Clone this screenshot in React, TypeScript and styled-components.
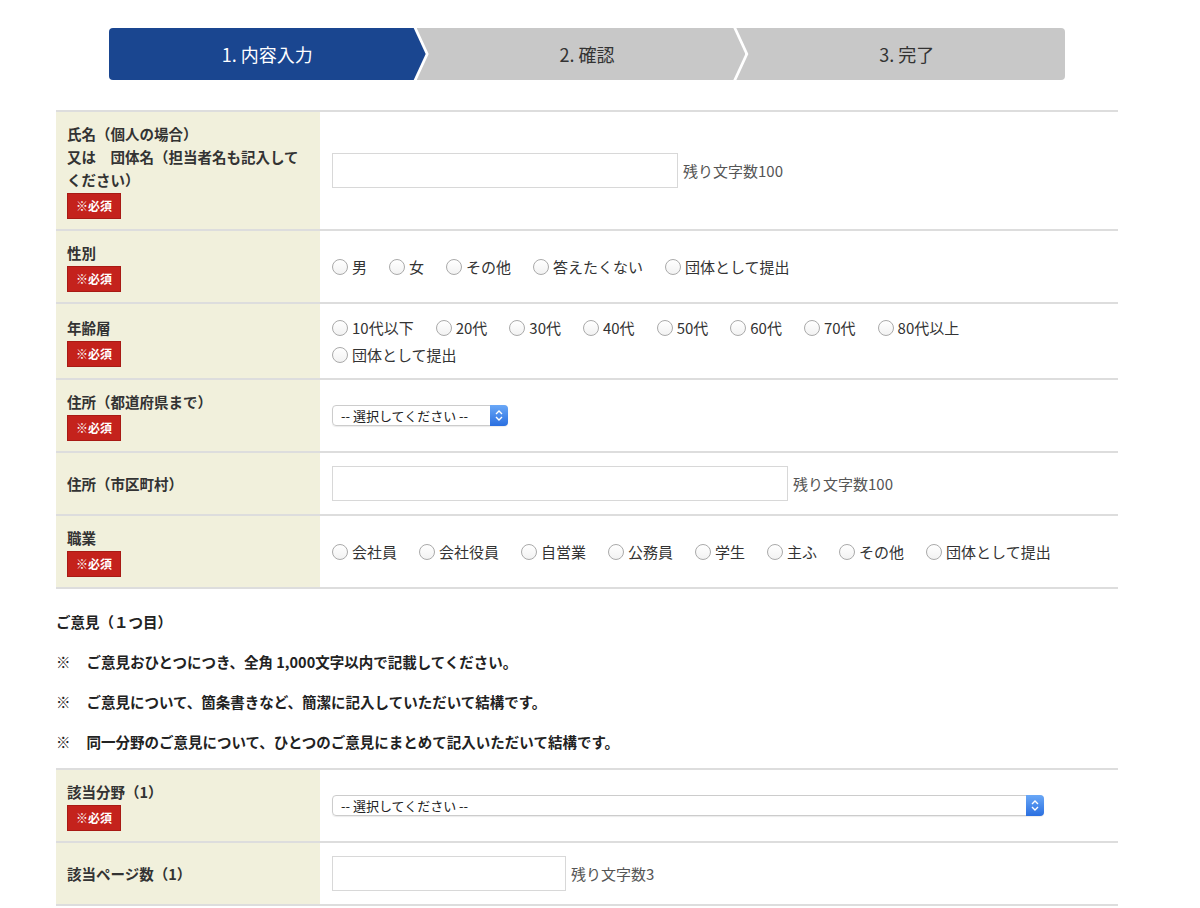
import styled, { createGlobalStyle } from 'styled-components';

const Global = createGlobalStyle`
  body {
    margin: 0;
    background: #fff;
    font-family: "Noto Sans CJK JP", "Noto Sans", sans-serif;
    color: #333;
  }
`;

const Page = styled.div`
  width: 1062px;
  margin: 0 0 0 56px;
  padding-top: 28px;
`;
const Steps = styled.div`
  display: flex;
  margin-left: 53px;
  width: 956px;
  height: 52px;
`;
const Step = styled.div<{ $active?: boolean; $first?: boolean; $last?: boolean }>`
  position: relative;
  flex: 1;
  display: flex;
  align-items: center;
  justify-content: center;
  font-size: 18px;
  color: ${(p) => (p.$active ? '#fff' : '#333')};
  background: ${(p) => (p.$active ? '#1a4690' : '#c8c8c8')};
  border-radius: ${(p) => (p.$first ? '4px 0 0 4px' : p.$last ? '0 4px 4px 0' : '0')};
  clip-path: ${(p) =>
    p.$last
      ? 'polygon(0 0, 100% 0, 100% 100%, 0 100%, 12px 50%)'
      : p.$first
      ? 'polygon(0 0, calc(100% - 12px) 0, 100% 50%, calc(100% - 12px) 100%, 0 100%)'
      : 'polygon(0 0, calc(100% - 12px) 0, 100% 50%, calc(100% - 12px) 100%, 0 100%, 12px 50%)'};
  margin-right: ${(p) => (p.$last ? '0' : '-9px')};
  padding-left: ${(p) => (p.$first ? '0' : '12px')};
`;
const Table = styled.div`
  margin-top: 30px;
  border-top: 2px solid #ddd;
`;
const Row = styled.div<{ $h: number }>`
  display: grid;
  grid-template-columns: 264px 1fr;
  min-height: ${(p) => p.$h}px;
  border-bottom: 2px solid #ddd;
`;
const Label = styled.div`
  background: #f1f0dc;
  padding: 10px 11px;
  font-size: 14.5px;
  font-weight: bold;
  line-height: 23px;
  display: flex;
  flex-direction: column;
  justify-content: center;
  align-items: flex-start;
`;
const Required = styled.span`
  background: #c4221c;
  color: #fff;
  font-size: 12px;
  font-weight: bold;
  padding: 0 8px;
  line-height: 24px;
  margin-top: 2px;
  border: 1px solid #a81a14;
`;
const Cell = styled.div`
  padding: 0 12px;
  display: flex;
  align-items: center;
  flex-wrap: wrap;
  font-size: 15px;
  gap: 6px 0;
  align-content: center;
`;
const TextInput = styled.div<{ $w: number }>`
  width: ${(p) => p.$w}px;
  height: 35px;
  border: 1px solid #d8d8d8;
  box-sizing: border-box;
`;
const Remain = styled.span`
  color: #555;
  margin-left: 5px;
  font-size: 15px;
`;
const Radio = styled.label`
  display: inline-flex;
  align-items: center;
  margin-right: 22px;
  color: #333;
  &::before {
    content: '';
    width: 16px;
    height: 16px;
    border-radius: 50%;
    border: 1px solid #aaa;
    box-sizing: border-box;
    margin-right: 4px;
    background: linear-gradient(#fff, #f2f2f2);
  }
`;
const Select = styled.div<{ $w: number }>`
  width: ${(p) => p.$w}px;
  height: 21px;
  border: 1px solid #ccc;
  border-radius: 4px;
  box-sizing: border-box;
  display: flex;
  align-items: center;
  font-size: 13px;
  color: #222;
  padding-left: 8px;
  position: relative;
  box-shadow: 0 1px 1px rgba(0, 0, 0, 0.08);
`;
const Stepper = styled.span`
  position: absolute;
  right: -1px;
  top: -1px;
  width: 18px;
  height: 21px;
  border-radius: 0 4px 4px 0;
  background: linear-gradient(#6aa8f7, #2a6fe0);
  display: flex;
  align-items: center;
  justify-content: center;
`;
const Notes = styled.div`
  padding: 22px 0 16px;
  font-size: 14.5px;
  font-weight: bold;
  color: #222;
  display: flex;
  flex-direction: column;
  gap: 19px;
`;
const Note = styled.div`
  display: flex;
  gap: 16px;
`;

const Sel = ({ w }: { w: number }) => (
  <Select $w={w}>
    -- 選択してください --
    <Stepper>
      <svg width="8" height="13" viewBox="0 0 8 13" fill="none" stroke="#fff" strokeWidth="1.4">
        <path d="M1 5l3-3 3 3M1 8l3 3 3-3" />
      </svg>
    </Stepper>
  </Select>
);

const radios = (items: string[]) => items.map((t) => <Radio key={t}>{t}</Radio>);

export default function App() {
  return (
    <Page>
      <Global />
      <Steps>
        <Step $active $first>1. 内容入力</Step>
        <Step>2. 確認</Step>
        <Step $last>3. 完了</Step>
      </Steps>
      <Table>
        <Row $h={116}>
          <Label>
            <div>氏名（個人の場合）<br />又は　団体名（担当者名も記入してください）</div>
            <Required>※必須</Required>
          </Label>
          <Cell>
            <TextInput $w={346} />
            <Remain>残り文字数100</Remain>
          </Cell>
        </Row>
        <Row $h={70}>
          <Label>性別<Required>※必須</Required></Label>
          <Cell>{radios(['男', '女', 'その他', '答えたくない', '団体として提出'])}</Cell>
        </Row>
        <Row $h={74}>
          <Label>年齢層<Required>※必須</Required></Label>
          <Cell>
            {radios(['10代以下', '20代', '30代', '40代', '50代', '60代', '70代', '80代以上', '団体として提出'])}
          </Cell>
        </Row>
        <Row $h={71}>
          <Label>住所（都道府県まで）<Required>※必須</Required></Label>
          <Cell><Sel w={176} /></Cell>
        </Row>
        <Row $h={61}>
          <Label>住所（市区町村）</Label>
          <Cell>
            <TextInput $w={456} />
            <Remain>残り文字数100</Remain>
          </Cell>
        </Row>
        <Row $h={71}>
          <Label>職業<Required>※必須</Required></Label>
          <Cell>
            {radios(['会社員', '会社役員', '自営業', '公務員', '学生', '主ふ', 'その他', '団体として提出'])}
          </Cell>
        </Row>
      </Table>
      <Notes>
        <div>ご意見（１つ目）</div>
        <Note><span>※</span><span>ご意見おひとつにつき、全角 1,000文字以内で記載してください。</span></Note>
        <Note><span>※</span><span>ご意見について、箇条書きなど、簡潔に記入していただいて結構です。</span></Note>
        <Note><span>※</span><span>同一分野のご意見について、ひとつのご意見にまとめて記入いただいて結構です。</span></Note>
      </Notes>
      <Table style={{ marginTop: 0 }}>
        <Row $h={70}>
          <Label>該当分野（1）<Required>※必須</Required></Label>
          <Cell><Sel w={712} /></Cell>
        </Row>
        <Row $h={61}>
          <Label>該当ページ数（1）</Label>
          <Cell>
            <TextInput $w={234} />
            <Remain>残り文字数3</Remain>
          </Cell>
        </Row>
      </Table>
    </Page>
  );
}
